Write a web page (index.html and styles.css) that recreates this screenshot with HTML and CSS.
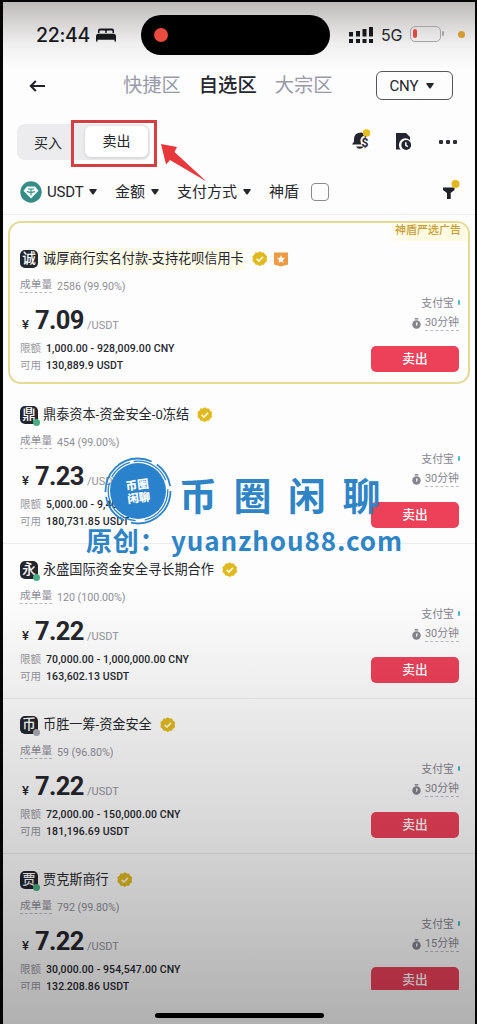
FILE: index.html
```
<!DOCTYPE html>
<html lang="zh-CN">
<head>
<meta charset="utf-8">
<title>自选区</title>
<link rel="stylesheet" href="styles.css">
</head>
<body>
<svg width="0" height="0" class="defs">
  <symbol id="verified" viewBox="0 0 16 16"><path fill="#e0b91e" d="M8 .3l2 1.200 2.400 0 1 2.100 2.200 1.700-.5 2.600.5 2.500-2.200 1.600-1 2.200-2.500 0L8 15.700l-2-1.500-2.400 0-1-2.200-2.200-1.600.5-2.500L.4 5.300l2.200-1.700 1-2.100 2.400 0z"/><path fill="none" stroke="#fff8d8" stroke-width="1.700" d="M4.800 8.200l2.300 2.200 4.200-4.300"/></symbol>
  <symbol id="timer" viewBox="0 0 10 12"><path fill="#85858b" d="M3 0h4v1.600H3z"/><circle cx="5" cy="7" r="4.700" fill="#85858b"/><path fill="#f4f4f5" d="M4.400 4.800h2L5.700 8.600H4.600z"/></symbol>
  <symbol id="caret" viewBox="0 0 8 6"><path fill="#24272e" d="M.7 0h6.600q.8.3.3 1.100L4.700 5.200q-.7.700-1.400 0L.4 1.100Q0 .3.700 0z"/></symbol>
</svg>
<main class="screen">
  <header class="status">
    <span class="clock">22:44</span>
    <svg class="bed" viewBox="0 0 20 14"><path fill="#17181c" d="M2 5V2.500Q2 .5 4 .5h12q2 0 2 2V5h-1.500V3.300Q16.500 2.500 15.700 2.500h-4.200q-.8 0-.8.800V5H9.300V3.300q0-.8-.8-.8H4.300q-.8 0-.8.800V5zM2 5.800h16q2 .4 2 2.400V13.500h-1.500V11.700h-17v1.800H0V8.200Q0 6.200 2 5.800z"/></svg>
    <div class="island"><i></i></div>
    <svg class="signal" viewBox="0 0 24 16"><path fill="#17181c" d="M0 5h4v4.500H0zM7 4h4v5.500H7zM13.500 2h4v7.500h-4zM20 0h4v9.500h-4zM0 12h4v4H0zM7 12h4v4H7zM13.500 12h4v4h-4zM20 12h4v4h-4z"/></svg>
    <span class="net">5G</span>
    <span class="battery"><i></i></span>
    <span class="mic"></span>
  </header>
  <nav class="tabs">
    <svg class="back" viewBox="0 0 16 12"><path fill="none" stroke="#202228" stroke-width="2" d="M16 6H1.800M6.800 1L1.800 6l5 5"/></svg>
    <span class="tab first">快捷区</span><span class="tab on">自选区</span><span class="tab">大宗区</span>
    <span class="currency">CNY<svg class="caret"><use href="#caret"/></svg></span>
  </nav>
  <section class="mode">
    <div class="toggle"><span class="buy">买入</span><span class="sell">卖出</span></div>
    <svg class="bell" viewBox="0 0 20 22"><path fill="#24262f" d="M1 15.500l2-3V9.500Q3.500 3.500 10 3.500q3.500.2 5 3-4.500 0-5.500 4-.5 3 1 5zM5 17.500h7.500q-1 2.300-3.700 2.300T5 17.500z"/><circle cx="15.500" cy="4" r="3.700" fill="#e5bd1c"/><text x="10.500" y="17.500" class="dollar">$</text></svg>
    <svg class="doc" viewBox="0 0 16 18"><path fill="#24262f" d="M0 0h10l4 4v3.200A6 6 0 0 0 4.800 16.500H0z"/><circle cx="10.200" cy="12" r="4.900" fill="#24262f"/><path fill="none" stroke="#fff" stroke-width="1.500" d="M9.800 9.200v3.200l2 1.300"/></svg>
    <span class="dots"><i></i><i></i><i></i></span>
  </section>
  <section class="filters">
    <svg class="tether" viewBox="0 0 22 22"><circle cx="11" cy="11" r="10.700" fill="#368d87"/><path fill="#f6fffd" d="M7 5.500h8l3.500 4.300L11 17.500 3.500 9.800z"/><path fill="none" stroke="#368d87" stroke-width="1.100" d="M8 8h6M11 8v6.500M7 10.500q4 1.700 8 0"/></svg>
    <span class="f-usdt">USDT</span><svg class="caret"><use href="#caret"/></svg>
    <span class="f-amt">金额</span><svg class="caret"><use href="#caret"/></svg>
    <span class="f-pay">支付方式</span><svg class="caret"><use href="#caret"/></svg>
    <span class="f-shield">神盾</span><span class="check"></span>
    <svg class="funnel" viewBox="0 0 18 20"><path fill="#202229" d="M1 7.500h11.500V10L8.700 13v6H5v-6L1 10z"/><circle cx="13.500" cy="4" r="4" fill="#e2b820"/></svg>
  </section>
  <div class="list">
    <article class="offer promo">
      <span class="ribbon">神盾严选广告</span>
      <div class="info">
        <div class="name"><span class="avatar">诚</span><span class="title">诚厚商行实名付款-支持花呗信用卡</span><svg class="ok"><use href="#verified"/></svg><svg class="medal" viewBox="0 0 14 15"><path fill="#ed9c45" d="M0 .5h14V12.500L7 14.500 0 12.500z"/><path fill="#fff" d="M7 3.200l1.200 2.500 2.700.4-2 1.900.5 2.700L7 9.400l-2.400 1.300.5-2.700-2-1.900 2.700-.4z"/></svg></div>
        <div class="count"><u>成单量</u><span>2586 (99.90%)</span></div>
        <div class="price"><small>¥</small><b>7.09</b><em>/USDT</em></div>
        <div class="line"><label>限额</label><span>1,000.00 - 928,009.00 CNY</span></div>
        <div class="line"><label>可用</label><span>130,889.9 USDT</span></div>
      </div>
      <div class="action"><div class="pay">支付宝<i></i></div><div class="time"><svg><use href="#timer"/></svg><u>30分钟</u></div><div class="btn">卖出</div></div>
    </article>
    <article class="offer">
      <div class="info">
        <div class="name"><span class="avatar">鼎<i></i></span><span class="title">鼎泰资本-资金安全-0冻结</span><svg class="ok"><use href="#verified"/></svg></div>
        <div class="count"><u>成单量</u><span>454 (99.00%)</span></div>
        <div class="price"><small>¥</small><b>7.23</b><em>/USDT</em></div>
        <div class="line"><label>限额</label><span>5,000.00 - 9,400.00 CNY</span></div>
        <div class="line"><label>可用</label><span>180,731.85 USDT</span></div>
      </div>
      <div class="action"><div class="pay">支付宝<i></i></div><div class="time"><svg><use href="#timer"/></svg><u>30分钟</u></div><div class="btn">卖出</div></div>
    </article>
    <article class="offer">
      <div class="info">
        <div class="name"><span class="avatar">永<i></i></span><span class="title">永盛国际资金安全寻长期合作</span><svg class="ok"><use href="#verified"/></svg></div>
        <div class="count"><u>成单量</u><span>120 (100.00%)</span></div>
        <div class="price"><small>¥</small><b>7.22</b><em>/USDT</em></div>
        <div class="line"><label>限额</label><span>70,000.00 - 1,000,000.00 CNY</span></div>
        <div class="line"><label>可用</label><span>163,602.13 USDT</span></div>
      </div>
      <div class="action"><div class="pay">支付宝<i></i></div><div class="time"><svg><use href="#timer"/></svg><u>30分钟</u></div><div class="btn">卖出</div></div>
    </article>
    <article class="offer">
      <div class="info">
        <div class="name"><span class="avatar">币<i class="off"></i></span><span class="title">币胜一筹-资金安全</span><svg class="ok"><use href="#verified"/></svg></div>
        <div class="count"><u>成单量</u><span>59 (96.80%)</span></div>
        <div class="price"><small>¥</small><b>7.22</b><em>/USDT</em></div>
        <div class="line"><label>限额</label><span>72,000.00 - 150,000.00 CNY</span></div>
        <div class="line"><label>可用</label><span>181,196.69 USDT</span></div>
      </div>
      <div class="action"><div class="pay">支付宝<i></i></div><div class="time"><svg><use href="#timer"/></svg><u>30分钟</u></div><div class="btn">卖出</div></div>
    </article>
    <article class="offer">
      <div class="info">
        <div class="name"><span class="avatar">贾<i></i></span><span class="title">贾克斯商行</span><svg class="ok"><use href="#verified"/></svg></div>
        <div class="count"><u>成单量</u><span>792 (99.80%)</span></div>
        <div class="price"><small>¥</small><b>7.22</b><em>/USDT</em></div>
        <div class="line"><label>限额</label><span>30,000.00 - 954,547.00 CNY</span></div>
        <div class="line"><label>可用</label><span>132,208.86 USDT</span></div>
      </div>
      <div class="action"><div class="pay">支付宝<i></i></div><div class="time"><svg><use href="#timer"/></svg><u>15分钟</u></div><div class="btn">卖出</div></div>
    </article>
  </div>
  <footer class="home"><i></i></footer>
  <div class="shade"></div>
</main>
<div class="callout"></div>
<svg class="arrow" viewBox="0 0 48 42"><path fill="#e9383c" d="M1 2l16 3-2.500 5L46.500 39.500 10 18l-4 4.500z"/></svg>
<div class="stamp">
  <svg class="seal" viewBox="0 0 70 70"><g fill="none" stroke="#2e83c9"><circle cx="35" cy="35" r="32.500" stroke-width="1.800" stroke-dasharray="58 7 31 5 66 6 26 5"/><circle cx="35" cy="35" r="29.800" stroke-width="1.300" stroke-dasharray="40 9 53 6 24 4"/></g><circle cx="35" cy="35" r="28" fill="#2a82cc"/><g class="seal-text" transform="rotate(-7 35 35)"><text x="35" y="33">币圈</text><text x="35" y="46">闲聊</text></g></svg>
  <span class="brand">币圈闲聊</span>
</div>
<div class="origin"><span>原创：</span><span class="site">yuanzhou88.com</span></div>
</body>
</html>
```
FILE: styles.css
```
* { box-sizing: border-box; }
body { margin: 0; width: 477px; height: 1024px; background: #050505; position: relative; overflow: hidden; padding: 2px 2px 0 3px; font-family: Roboto, "Noto Sans CJK SC", sans-serif; color: #24262c; }
i, em { font-style: normal; }
svg { display: block; flex: none; }
.defs { position: absolute; }
.screen { width: 472px; height: 1022px; position: relative; overflow: hidden; display: flex; flex-direction: column; background: linear-gradient(#bbbab9 0, #d8d7d6 22px, #f0efef 42px, #fefdfe 68px); }
.status { height: 63px; display: flex; align-items: center; padding-left: 33px; flex: none; }
.clock { width: 56px; font: 500 19.500px Inter, sans-serif; letter-spacing: -.3px; color: #17181c; margin-top: 2px; }
.bed { width: 20px; height: 14px; margin-left: 4px; margin-top: 2px; }
.island { width: 189px; height: 40px; border-radius: 20px; background: #000; margin-left: 25px; margin-top: 2px; display: flex; align-items: center; padding-left: 13px; }
.island i { width: 14px; height: 14px; border-radius: 50%; background: #e94b3e; }
.signal { width: 24px; height: 16px; margin: 2px 0 0 19px; }
.net { width: 30px; margin: 3px 0 0 8px; font: 400 16px Inter, sans-serif; letter-spacing: -.3px; }
.battery { width: 31px; height: 16px; border: 1.500px solid #a4a4a4; border-radius: 5px; padding: 2px; position: relative; margin-left: -1px; }
.battery::after { content: ""; position: absolute; right: -4px; top: 4px; width: 2px; height: 5px; background: #a4a4a4; border-radius: 1px; }
.battery i { display: block; width: 4px; height: 9px; background: #df4840; border-radius: 2px; }
.mic { width: 7px; height: 7px; border-radius: 50%; background: #d69a35; margin: 1px 0 0 17px; }
.tabs { height: 41px; flex: none; display: flex; align-items: center; padding-left: 26px; }
.back { width: 16px; height: 12px; }
.tab { font-size: 19.300px; line-height: 28px; color: #989aa6; margin-left: 18px; white-space: nowrap; }
.tab.first { margin-left: 78px; }
.tab.on { color: #25272f; font-weight: 500; }
.currency { width: 77px; height: 29px; border: 1.500px solid #55565b; border-radius: 6px; margin-left: 43px; display: flex; align-items: center; padding-left: 13px; font-size: 15px; letter-spacing: -.2px; gap: 8px; }
.caret { width: 8px; height: 6px; }
.mode { height: 66px; flex: none; display: flex; align-items: center; padding: 5px 18px 0 14px; }
.toggle { width: 133px; height: 36px; flex: none; background: #ececef; border-radius: 8px; display: flex; align-items: center; padding: 0 2px 0 17px; font-size: 14px; white-space: nowrap; }
.buy { width: 28px; flex: none; }
.sell { margin-left: 23px; width: 63px; flex: none; height: 31px; border-radius: 6px; background: #fff; box-shadow: 0 1px 3px #ccc; text-align: center; line-height: 31px; }
.bell { width: 20px; height: 22px; margin: 0 0 3px 201px; }
.dollar { font: bold 12px Roboto, sans-serif; fill: #24262f; }
.doc { width: 16px; height: 18px; margin: 0 0 0 25px; }
.dots { display: flex; gap: 3px; margin: 0 0 0 27px; }
.dots i { width: 4px; height: 4px; background: #2d2e34; border-radius: 1px; }
.filters { height: 43px; flex: none; display: flex; align-items: center; padding: 0 0 2px 17px; border-bottom: 1px solid #eeedf0; font-size: 15px; line-height: 22px; white-space: nowrap; }
.tether { width: 22px; height: 22px; }
.f-usdt { width: 42px; margin-left: 5px; letter-spacing: -.2px; }
.f-amt { width: 30px; margin: 0 6px 0 18px; }
.f-pay { width: 60px; margin: 0 6px 0 18px; }
.f-shield { width: 30px; margin-left: 18px; }
.check { width: 18px; height: 18px; border: 1.300px solid #8c8c90; border-radius: 4px; margin-left: 12px; }
.funnel { width: 18px; height: 20px; margin: 0 0 4px 113px; }
.list { height: 775px; flex: none; overflow: hidden; padding-top: 6px; }
.offer { height: 155px; padding: 14px 16px 0 16px; display: flex; justify-content: space-between; border-bottom: 1px solid #ecebed; }
.promo { height: 163px; margin: 0 5px 5px; padding: 24px 9px 0 9px; border: 2px solid #e3da98; border-radius: 13px; position: relative; background: #fefdfe; }
.ribbon { position: absolute; right: 0; top: 0; width: 84px; height: 18px; padding: 0 0 0 11px; font-size: 11px; line-height: 15px; font-weight: 500; color: #c99d35; background: linear-gradient(90deg, #fefdfe, #fffbe2 30%); border-top-right-radius: 11px; }
.info { flex: none; }
.name { height: 24px; display: flex; align-items: center; font-size: 13.150px; }
.avatar { width: 18px; height: 18px; border-radius: 5px; background: #23262d; color: #fff; font-size: 13.500px; font-weight: 500; line-height: 17px; text-align: center; position: relative; margin-left: 1px; flex: none; }
.avatar i { position: absolute; right: -2px; bottom: -2px; width: 7px; height: 7px; border-radius: 50%; background: #48ad83; }
.avatar .off { background: #a9a9b1; }
.title { margin-left: 5px; white-space: nowrap; line-height: 22px; }
.promo .title { background: #fffbe9; }
.ok { width: 15.500px; height: 15.500px; margin-left: 8px; }
.medal { width: 14px; height: 15px; margin-left: 7px; }
.count { height: 29px; display: flex; align-items: center; font-size: 10.700px; color: #8e8f99; }
.count u { text-decoration: none; border-bottom: 1px dashed #bdbdc6; line-height: 14px; height: 15px; margin-left: 1px; width: 32px; white-space: nowrap; }
.count span { margin-left: 5px; letter-spacing: -.02px; padding-top: 2px; }
.price { height: 40px; display: flex; align-items: baseline; line-height: 40px; white-space: nowrap; }
.price small { font-size: 13px; font-weight: 500; width: 13px; margin-left: 3px; }
.price b { font-size: 25.500px; width: 49px; letter-spacing: -.6px; }
.price em { font-size: 11px; color: #92939c; margin-left: 3px; }
.line { height: 17px; display: flex; align-items: center; font-size: 10.500px; white-space: nowrap; line-height: 17px; }
.line label { width: 27px; padding-left: 1px; color: #9697a1; }
.line span { font-size: 10.500px; letter-spacing: .1px; color: #25272d; font-weight: 500; }
.action { width: 88px; padding-top: 45px; display: flex; flex-direction: column; align-items: flex-end; font-size: 10.900px; color: #85868f; flex: none; }
.pay { height: 20px; display: flex; align-items: center; gap: 4px; white-space: nowrap; }
.pay i { width: 2px; height: 5px; border-radius: 1px; background: #49b9cd; margin-right: -1px; }
.time { height: 23px; display: flex; align-items: center; gap: 4px; }
.time svg { width: 9px; height: 11px; }
.time u { text-decoration: none; border-bottom: 1px dashed #bdbdc6; line-height: 14px; height: 15px; white-space: nowrap; }
.btn { width: 88px; height: 26px; margin-top: 11px; background: #ed4159; border-radius: 5px; color: #fff; font-size: 12.700px; font-weight: 500; line-height: 26px; text-align: center; }
.home { flex: 1; display: flex; justify-content: center; padding-top: 23px; }
.home i { width: 169px; height: 5px; border-radius: 3px; background: #000; }
.shade { position: absolute; left: 0; right: 0; bottom: 0; height: 434px; background: linear-gradient(rgba(0,0,0,0), rgba(0,0,0,.07) 26%, rgba(0,0,0,.14) 52%, rgba(0,0,0,.22) 75%, rgba(0,0,0,.3)); }
.callout { position: absolute; left: 71px; top: 120px; width: 86px; height: 47px; border: 3.500px solid #d43f43; }
.arrow { position: absolute; left: 160px; top: 142px; width: 48px; height: 42px; }
.stamp { position: absolute; left: 103px; top: 456px; display: flex; align-items: center; color: #2f84c6; }
.seal { width: 70px; height: 70px; }
.seal-text { fill: #fff; font: 900 11.500px "Noto Sans CJK SC", sans-serif; text-anchor: middle; }
.brand { font: 700 38px/48px "Noto Sans CJK SC", sans-serif; letter-spacing: 16.500px; margin-left: 6px; margin-top: 6px; white-space: nowrap; }
.origin { position: absolute; left: 86px; top: 522px; display: flex; color: #2f84c6; font: 700 26px/36px "Noto Sans CJK SC", sans-serif; white-space: nowrap; }
.origin span:first-child { width: 85px; letter-spacing: .8px; }
.site { letter-spacing: .9px; }
```
